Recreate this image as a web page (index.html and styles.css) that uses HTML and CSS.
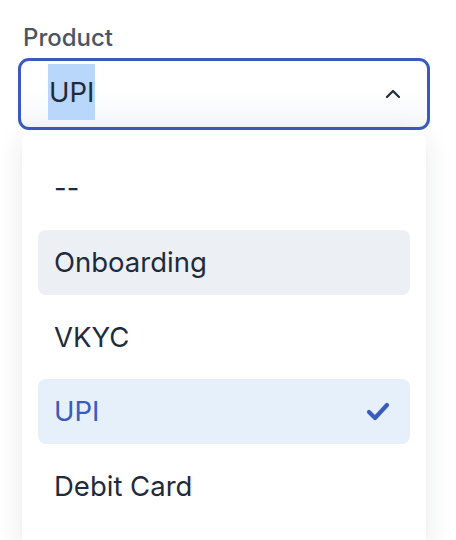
FILE: index.html
```html
<!DOCTYPE html>
<html>
<head>
  <title>Product</title>
  <link rel="stylesheet" href="styles.css">
</head>
<body>

  <div class="field">
    <div class="field-label">Product</div>

    <div class="select-box">
      <span class="select-value">UPI</span>
      <svg class="chevron" width="16" height="10" viewBox="0 0 16 10">
        <polyline points="2,8 8,2 14,8" fill="none" stroke="#1e2b3c" stroke-width="2.2" stroke-linecap="round" stroke-linejoin="round"/>
      </svg>
    </div>

    <div class="menu">
      <div class="option">--</div>
      <div class="option hover">Onboarding</div>
      <div class="option">VKYC</div>
      <div class="option selected">
        <span>UPI</span>
        <svg class="check" width="24" height="19" viewBox="0 0 24 19">
          <polyline points="3,10 9,16 21,3" fill="none" stroke="#3a5abf" stroke-width="4.2" stroke-linecap="round" stroke-linejoin="round"/>
        </svg>
      </div>
      <div class="option">Debit Card</div>
    </div>
  </div>

</body>
</html>
```

FILE: styles.css
```css
body {
  margin: 0;
  background: #ffffff;
  font-family: Inter, "Noto Sans", sans-serif;
  color: #1e2b3c;
}
.field {
  width: 412px;
  padding: 24px 0 0 18px;
}
.field-label {
  font-size: 24px;
  font-weight: 500;
  line-height: 28px;
  color: #4a5565;
  margin-left: 5px;
  margin-bottom: 6px;
}
.select-box {
  box-sizing: border-box;
  height: 72px;
  border: 3px solid #3a5abf;
  border-radius: 11px;
  background: linear-gradient(#ffffff 40%, #f6f7f9);
  display: flex;
  align-items: center;
  justify-content: space-between;
  padding: 0 26px 0 27px;
}
.select-value {
  font-size: 27.5px;
  line-height: 56px;
  background: #b9d6fb;
  padding: 0 1px;
  margin-top: -4px;
}
.menu {
  margin: 1px 4px 0 4px;
  background: #ffffff;
  border-radius: 11px;
  box-shadow: 0 6px 28px rgba(30, 43, 60, 0.1);
  padding: 24px 16px 30px;
  display: flex;
  flex-direction: column;
  gap: 9.5px;
}
.option {
  height: 65px;
  display: flex;
  align-items: center;
  justify-content: space-between;
  padding: 0 20px 0 16px;
  border-radius: 8px;
  font-size: 27.5px;
}
.option.hover {
  background: #eceff4;
}
.option.selected {
  background: #e6f0fb;
  color: #3a5abf;
}
```
